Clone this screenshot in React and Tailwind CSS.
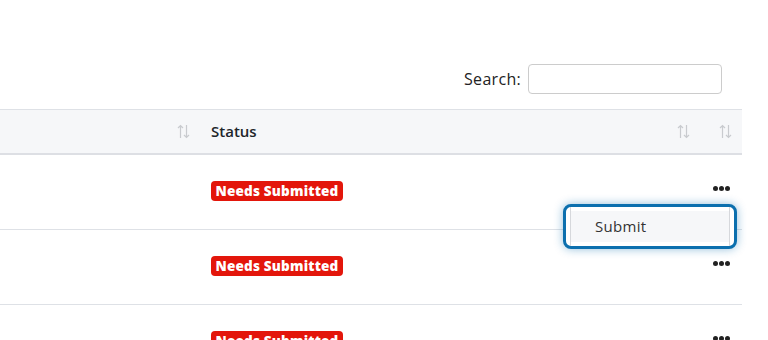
import React from 'react';

function SortIcon() {
    return (
        <svg width="13" height="15" viewBox="0 0 13 15" fill="none" stroke="#c9cbcf" strokeWidth="1.2">
            <path d="M3.5 14V1.5M1 4l2.5-2.5L6 4" />
            <path d="M9.5 1v12.5M7 11l2.5 2.5L12 11" />
        </svg>
    );
}

function Dots() {
    return (
        <div className="flex gap-[1px]">
            <span className="w-[5px] h-[5px] rounded-full bg-[#222]" />
            <span className="w-[5px] h-[5px] rounded-full bg-[#222]" />
            <span className="w-[5px] h-[5px] rounded-full bg-[#222]" />
        </div>
    );
}

const rows = [1, 2, 3];

export default function App() {
    return (
        <div className="relative w-[768px] h-[340px] overflow-hidden bg-white font-['Open_Sans',sans-serif] text-[#212529]">
            {/* Search */}
            <div className="flex justify-end items-start gap-[7px] pt-[64px] pr-[46px] h-[109px]">
                <span className="text-[16px] leading-[30px] tracking-[0.3px] text-[#222]">Search:</span>
                <input className="w-[194px] h-[30px] border border-[#ccc] rounded-[4px] outline-none" />
            </div>

            {/* Table */}
            <div className="w-[742px]">
                <div className="grid grid-cols-[200px_500px_42px] h-[46px] bg-[#f6f7f9] border-t border-[#dee1e6] border-b-2 border-b-[#dddfe4] items-center">
                    <div className="flex justify-end pr-[10px]"><SortIcon /></div>
                    <div className="flex items-center justify-between pl-[11px] pr-[10px]">
                        <span className="text-[15px] font-semibold">Status</span>
                        <SortIcon />
                    </div>
                    <div className="flex justify-end pr-[10px]"><SortIcon /></div>
                </div>
                {rows.map((r) => (
                    <div key={r} className="grid grid-cols-[200px_500px_42px] h-[75px] border-b border-[#dee1e6] items-center">
                        <div />
                        <div className="pl-[11px] pb-[4px]">
                            <span className="inline-block bg-[#e3160b] text-white text-[13.5px] font-extrabold leading-[20px] rounded-[4px] w-[132px] text-center tracking-[0.2px]">
                                Needs Submitted
                            </span>
                        </div>
                        <div className="flex justify-center pb-[8px]"><Dots /></div>
                    </div>
                ))}
            </div>

            {/* Dropdown */}
            <div className="absolute left-[563px] top-[204px] w-[174px] h-[45px] rounded-[8px] border-[3px] border-[#0b6fae] shadow-[0_0_10px_rgba(14,111,176,0.45)] bg-white">
                <div className="mx-[4px] h-full border-x border-[#d6d8dc] flex flex-col justify-center">
                    <div className="bg-[#f6f7f9] h-[31px] flex items-center pl-[24px] text-[15px] tracking-[0.3px] text-[#333]">Submit</div>
                </div>
            </div>
        </div>
    );
}
